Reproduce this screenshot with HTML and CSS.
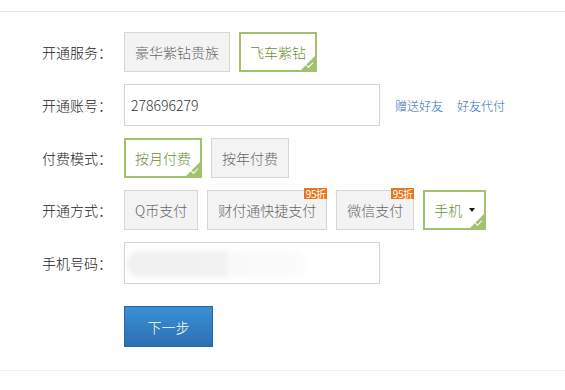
FILE: index.html
```html
<!DOCTYPE html>
<html lang="zh-CN">
<head>
<meta charset="utf-8">
<title>开通服务</title>
<link rel="stylesheet" href="styles.css">
</head>
<body>
<div class="topline"></div>
<form class="form">
  <div class="row">
    <div class="label">开通服务：</div>
    <div class="opts">
      <span class="opt">豪华紫钻贵族</span>
      <span class="opt on">飞车紫钻</span>
    </div>
  </div>
  <div class="row">
    <div class="label">开通账号：</div>
    <div class="field">278696279</div>
    <a class="link first" href="#">赠送好友</a>
    <a class="link" href="#">好友代付</a>
  </div>
  <div class="row">
    <div class="label">付费模式：</div>
    <div class="opts">
      <span class="opt on">按月付费</span>
      <span class="opt">按年付费</span>
    </div>
  </div>
  <div class="row">
    <div class="label">开通方式：</div>
    <div class="opts">
      <span class="opt">Q币支付</span>
      <span class="opt">财付通快捷支付<span class="tag">95折</span></span>
      <span class="opt">微信支付<span class="tag">95折</span></span>
      <span class="opt on">手机<span class="caret"></span></span>
    </div>
  </div>
  <div class="row">
    <div class="label">手机号码：</div>
    <div class="field"><span class="smudge"></span></div>
  </div>
  <div class="row submit-row">
    <div class="label"></div>
    <button type="button" class="next">下一步</button>
  </div>
</form>
</body>
</html>
```

FILE: styles.css
```css
html, body {
  margin: 0;
  padding: 0;
  background: #fff;
}

body {
  width: 565px;
  font-family: "Noto Sans CJK SC", "Microsoft YaHei", sans-serif;
  font-weight: 300;
  font-size: 14px;
  color: #333;
}

.topline {
  height: 11px;
  border-bottom: 1px solid #e6e6e6;
}

.form {
  margin: 0;
  padding: 20px 0 23px;
  border-bottom: 1px solid #efefef;
  display: flex;
  flex-direction: column;
  gap: 12px;
}

.row {
  display: flex;
  align-items: center;
}

.label {
  width: 124px;
  box-sizing: border-box;
  padding-right: 12px;
  text-align: right;
  font-size: 14px;
  line-height: 20px;
  color: #222;
  flex: none;
}

.opts {
  display: flex;
  gap: 9px;
}

.opt {
  position: relative;
  display: inline-flex;
  align-items: center;
  height: 40px;
  box-sizing: border-box;
  padding: 0 10px;
  border: 1px solid #d6d6d6;
  background: #f3f3f3;
  color: #666;
  font-size: 14px;
  white-space: nowrap;
}

.opt.on {
  border: 2px solid #a3c06e;
  background: #fff;
  padding: 0 9px;
  color: #6b8e35;
}

.opt.on::after {
  content: "";
  position: absolute;
  right: 0;
  bottom: 0;
  width: 0;
  height: 0;
  border-style: solid;
  border-width: 0 0 14px 14px;
  border-color: transparent transparent #a3c06e transparent;
}

.opt.on::before {
  content: "";
  position: absolute;
  right: 2px;
  bottom: 4px;
  width: 6px;
  height: 3px;
  border-left: 1.5px solid #fff;
  border-bottom: 1.5px solid #fff;
  transform: rotate(-45deg);
  z-index: 1;
}

.tag {
  position: absolute;
  top: -3px;
  right: -1px;
  width: 23px;
  height: 11px;
  background: #e8761e;
  color: #fff;
  font-size: 10px;
  font-weight: 400;
  line-height: 11px;
  text-align: center;
  letter-spacing: -0.5px;
}

.caret {
  display: inline-block;
  width: 0;
  height: 0;
  margin-left: 7px;
  border-left: 3.5px solid transparent;
  border-right: 3.5px solid transparent;
  border-top: 4px solid #1a1a1a;
}

.field {
  position: relative;
  width: 256px;
  height: 42px;
  box-sizing: border-box;
  border: 1px solid #d3d3d3;
  background: #fff;
  padding-left: 6px;
  line-height: 40px;
  font-size: 14px;
  color: #333;
  overflow: hidden;
}

.smudge {
  position: absolute;
  left: 2px;
  top: 8px;
  width: 180px;
  height: 26px;
  border-radius: 13px;
  background: linear-gradient(to right, #f1f1f1 0, #f2f2f2 55%, #f9f9f9 56%, #fcfcfc 100%);
  filter: blur(2px);
}

.link {
  margin-left: 14px;
  font-size: 12px;
  color: #2d6db3;
  text-decoration: none;
}

.link.first {
  margin-left: 15px;
}

.submit-row {
  margin-top: 10px;
}

.next {
  width: 89px;
  height: 41px;
  margin: 0;
  padding: 0;
  border: 1px solid #2865a6;
  background: linear-gradient(to bottom, #3a8fd6, #2c6fb2);
  color: #fff;
  font-family: "Noto Sans CJK SC", "Microsoft YaHei", sans-serif;
  font-weight: 300;
  font-size: 14px;
  cursor: pointer;
}
```
